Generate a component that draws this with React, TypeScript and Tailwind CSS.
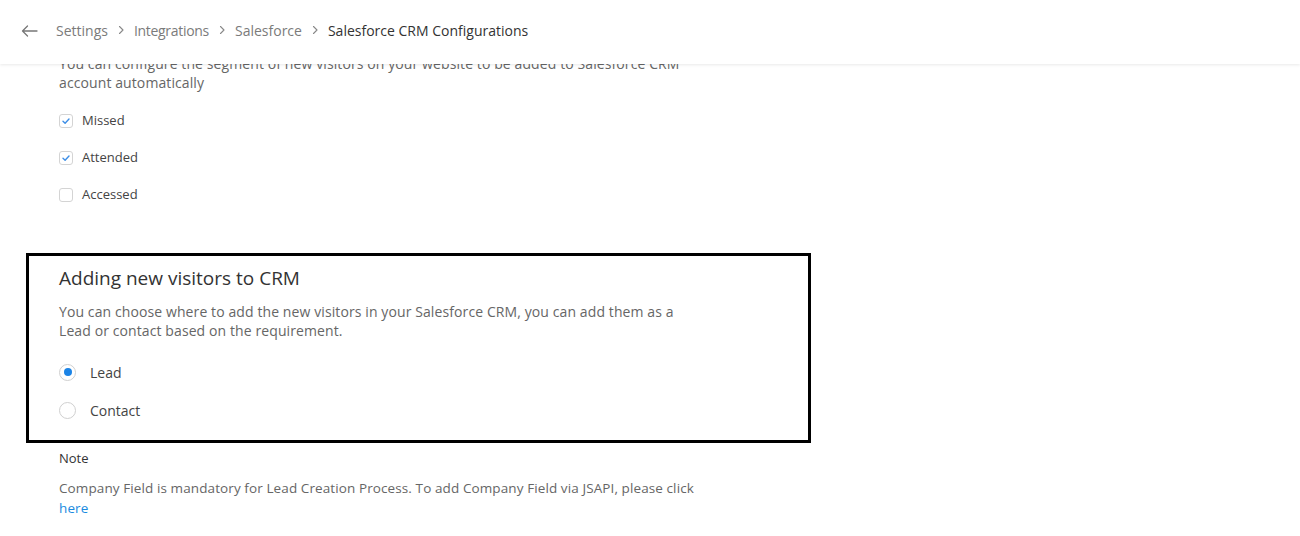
import React from "react";

const font = { fontFamily: '"Open Sans", "Liberation Sans", sans-serif' };

function Check({ checked, label }: { checked: boolean; label: string }) {
  return (
    <div className="flex items-center h-[20px]">
      <span className="w-[14px] h-[14px] rounded-[3px] border border-[#d4d4d4] bg-white flex items-center justify-center">
        {checked && (
          <svg width="10" height="10" viewBox="0 0 10 10" fill="none">
            <path d="M2 5.2 L4.1 7.2 L8 3" stroke="#3d8ee6" strokeWidth="1.4" strokeLinecap="round" strokeLinejoin="round" />
          </svg>
        )}
      </span>
      <span className="ml-[9px] text-[13px] text-[#444]">{label}</span>
    </div>
  );
}

function Radio({ checked, label }: { checked: boolean; label: string }) {
  return (
    <div className="flex items-center h-[20px]">
      <span className="w-[17px] h-[17px] rounded-full border border-[#d0d0d0] bg-white flex items-center justify-center">
        {checked && <span className="w-[8px] h-[8px] rounded-full bg-[#1c84e6]" />}
      </span>
      <span className="ml-[14px] text-[14px] text-[#444]">{label}</span>
    </div>
  );
}

function Chevron() {
  return (
    <svg width="12" height="12" viewBox="0 0 12 12" fill="none" className="mx-[7px]">
      <path d="M4.5 2.5 L8 6 L4.5 9.5" stroke="#888" strokeWidth="1.1" strokeLinecap="round" strokeLinejoin="round" />
    </svg>
  );
}

export default function App() {
  return (
    <div className="relative w-[1300px] h-[536px] bg-white overflow-hidden" style={font}>
      <div className="absolute top-0 left-0 right-0 h-[64px] bg-white z-10 shadow-[0_1px_3px_rgba(0,0,0,0.09)] flex items-center pl-[21px]">
        <svg width="17" height="12" viewBox="0 0 17 12" fill="none" className="-mt-[3px]">
          <path d="M16 6 H1.5 M6.5 1 L1.5 6 L6.5 11" stroke="#777" strokeWidth="1.3" strokeLinecap="round" strokeLinejoin="round" />
        </svg>
        <div className="flex items-center ml-[18px] text-[14px] -mt-[4px]">
          <span className="text-[#7b7b7b]">Settings</span>
          <Chevron />
          <span className="text-[#7b7b7b] tracking-[-0.3px]">Integrations</span>
          <Chevron />
          <span className="text-[#7b7b7b]">Salesforce</span>
          <Chevron />
          <span className="text-[#333]">Salesforce CRM Configurations</span>
        </div>
      </div>

      <div className="pt-[54px]">
        <div className="pl-[59px]">
          <p className="w-[640px] text-[14px] tracking-[0.1px] leading-[19px] text-[#666]">
            You can configure the segment of new visitors on your website to be added to Salesforce CRM account automatically
          </p>
          <div className="mt-[19px] flex flex-col gap-[17px]">
            <Check checked label="Missed" />
            <Check checked label="Attended" />
            <Check checked={false} label="Accessed" />
          </div>
        </div>

        <div className="ml-[26px] mt-[48px] w-[785px] h-[190px] border-[3px] border-black pl-[30px] pt-[11px]">
          <h2 className="text-[19px] leading-[22px] text-[#333]">Adding new visitors to CRM</h2>
          <p className="mt-[13px] w-[640px] text-[14px] tracking-[0.1px] leading-[19px] text-[#666]">
            You can choose where to add the new visitors in your Salesforce CRM, you can add them as a Lead or contact based on the requirement.
          </p>
          <div className="mt-[22px] flex flex-col gap-[18px]">
            <Radio checked label="Lead" />
            <Radio checked={false} label="Contact" />
          </div>
        </div>

        <div className="pl-[59px] mt-[6px]">
          <div className="text-[13px] leading-[18px] text-[#333]">Note</div>
          <p className="mt-[11px] w-[648px] text-[13.5px] tracking-[0.1px] leading-[20px] text-[#666]">
            Company Field is mandatory for Lead Creation Process. To add Company Field via JSAPI, please click{" "}
            <span className="text-[#1a8ae0]">here</span>
          </p>
        </div>
      </div>
    </div>
  );
}
